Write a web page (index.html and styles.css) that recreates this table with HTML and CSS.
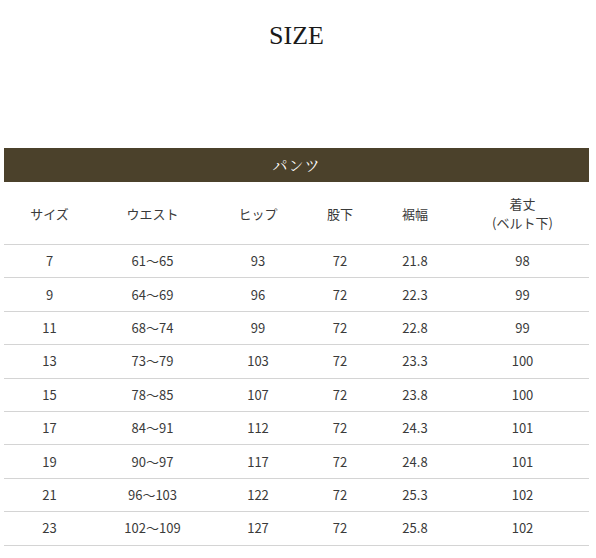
FILE: index.html
```html
<!DOCTYPE html>
<html lang="ja">
<head>
<meta charset="utf-8">
<title>SIZE</title>
<link rel="stylesheet" href="styles.css">
</head>
<body>
<div class="page">
  <h1 class="title">SIZE</h1>
  <div class="bar">パンツ</div>
  <table class="size-table">
    <colgroup>
      <col class="c1"><col class="c2"><col class="c3"><col class="c4"><col class="c5"><col class="c6">
    </colgroup>
    <thead>
      <tr>
        <th>サイズ</th><th>ウエスト</th><th>ヒップ</th><th>股下</th><th>裾幅</th><th>着丈<br>(ベルト下)</th>
      </tr>
    </thead>
    <tbody>
      <tr><td>7</td><td>61～65</td><td>93</td><td>72</td><td>21.8</td><td>98</td></tr>
      <tr><td>9</td><td>64～69</td><td>96</td><td>72</td><td>22.3</td><td>99</td></tr>
      <tr><td>11</td><td>68～74</td><td>99</td><td>72</td><td>22.8</td><td>99</td></tr>
      <tr><td>13</td><td>73～79</td><td>103</td><td>72</td><td>23.3</td><td>100</td></tr>
      <tr><td>15</td><td>78～85</td><td>107</td><td>72</td><td>23.8</td><td>100</td></tr>
      <tr><td>17</td><td>84～91</td><td>112</td><td>72</td><td>24.3</td><td>101</td></tr>
      <tr><td>19</td><td>90～97</td><td>117</td><td>72</td><td>24.8</td><td>101</td></tr>
      <tr><td>21</td><td>96～103</td><td>122</td><td>72</td><td>25.3</td><td>102</td></tr>
      <tr><td>23</td><td>102～109</td><td>127</td><td>72</td><td>25.8</td><td>102</td></tr>
    </tbody>
  </table>
</div>
</body>
</html>
```

FILE: styles.css
```css
html, body {
  margin: 0;
  padding: 0;
  background: #ffffff;
}

.page {
  width: 585px;
  margin-left: 4px;
  padding-top: 21px;
}

.title {
  margin: 0 0 97px 0;
  font-family: "Liberation Serif", "Times New Roman", serif;
  font-weight: normal;
  font-size: 26px;
  line-height: 30px;
  color: #1a1a1a;
  text-align: center;
}

.bar {
  height: 34px;
  line-height: 34px;
  background: #4b412b;
  color: #ffffff;
  text-align: center;
  font-family: "Noto Serif CJK JP", "Noto Sans CJK JP", serif;
  font-size: 15px;
  letter-spacing: 1px;
}

.size-table {
  width: 585px;
  border-collapse: collapse;
  table-layout: fixed;
  font-family: "Noto Sans CJK JP", "Liberation Sans", sans-serif;
  font-size: 13px;
  color: #3a3a3a;
}

.c1 { width: 91px; }
.c2 { width: 115px; }
.c3 { width: 96px; }
.c4 { width: 68px; }
.c5 { width: 82px; }
.c6 { width: 133px; }

.size-table th {
  height: 62px;
  padding: 0;
  font-weight: normal;
  line-height: 19px;
  text-align: center;
  vertical-align: middle;
  border-bottom: 1px solid #d4d4d4;
}

.size-table td {
  height: 32.4px;
  padding: 0;
  line-height: 16px;
  text-align: center;
  vertical-align: middle;
  border-bottom: 1px solid #d4d4d4;
}
```
